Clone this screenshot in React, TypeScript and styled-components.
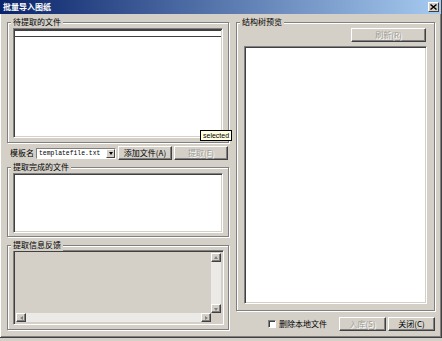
import styled, { createGlobalStyle } from "styled-components";

const GlobalStyle = createGlobalStyle`
  html, body {
    margin: 0;
    padding: 0;
    background: #d4d0c8;
  }
  body {
    font-family: "Noto Sans CJK SC", "Liberation Sans", sans-serif;
    font-size: 8px;
    color: #000;
  }
`;

const Window = styled.div`
  width: 442px;
  height: 338px;
  box-sizing: border-box;
  background: #d4d0c8;
  border-right: 1px solid #404040;
  border-bottom: 1px solid #404040;
  box-shadow: inset 1px 1px 0 #fff, inset -1px -1px 0 #808080;
  display: flex;
  flex-direction: column;
`;

const TitleBar = styled.div`
  height: 14px;
  flex: none;
  display: flex;
  align-items: center;
  justify-content: space-between;
  padding: 0 2px 0 3px;
  background: linear-gradient(to right, #0a246a, #a6caf0);
`;

const Title = styled.span`
  color: #fff;
  font-weight: bold;
  font-size: 8px;
  line-height: 10px;
`;

const CloseBox = styled.div`
  width: 11px;
  height: 10px;
  box-sizing: border-box;
  background: #d4d0c8;
  border-top: 1px solid #fff;
  border-left: 1px solid #fff;
  border-right: 1px solid #404040;
  border-bottom: 1px solid #404040;
  display: flex;
  align-items: center;
  justify-content: center;
`;

const Content = styled.div`
  flex: 1;
  display: flex;
  gap: 7px;
  padding-left: 7px;
`;

const LeftCol = styled.div`
  width: 222px;
  display: flex;
  flex-direction: column;
  padding-top: 8px;
`;

const RightCol = styled.div`
  width: 199px;
  display: flex;
  flex-direction: column;
  padding-top: 8px;
`;

const Group = styled.div<{ $h: number; $mt?: number; $pad: string }>`
  position: relative;
  height: ${(p) => p.$h}px;
  margin-top: ${(p) => p.$mt ?? 0}px;
  box-sizing: border-box;
  border: 1px solid #808080;
  box-shadow: inset 1px 1px 0 #fff, 1px 1px 0 #fff;
  padding: ${(p) => p.$pad};
  display: flex;
  flex-direction: column;
`;

const Legend = styled.span`
  position: absolute;
  top: -7px;
  left: 3px;
  padding: 0 2px;
  background: #d4d0c8;
  font-size: 8px;
  line-height: 12px;
  white-space: nowrap;
`;

const Sunken = styled.div<{ $bg?: string }>`
  flex: 1;
  box-sizing: border-box;
  background: ${(p) => p.$bg ?? "#fff"};
  border-top: 1px solid #808080;
  border-left: 1px solid #808080;
  border-right: 1px solid #fff;
  border-bottom: 1px solid #fff;
  box-shadow: inset 1px 1px 0 #404040, inset -1px -1px 0 #d4d0c8;
  display: flex;
  flex-direction: column;
  padding: 2px;
`;

const ListHeader = styled.div`
  height: 5px;
  background: #fff;
  border-top: 1px solid #404040;
  border-bottom: 1px solid #404040;
  margin: -1px -1px 0 -1px;
`;

const Tip = styled.div`
  position: absolute;
  left: 192px;
  top: 107px;
  height: 11px;
  padding: 0 2px;
  background: #ffffe1;
  border: 1px solid #000;
  font-family: "Liberation Sans", sans-serif;
  font-size: 7px;
  line-height: 9px;
  box-sizing: border-box;
`;

const Row = styled.div<{ $mt: number }>`
  display: flex;
  align-items: center;
  margin-top: ${(p) => p.$mt}px;
  height: 14px;
`;

const Label = styled.span`
  flex: none;
  white-space: nowrap;
  margin: 0 2px 0 3px;
  font-size: 8px;
  line-height: 10px;
`;

const Combo = styled.div`
  flex: none;
  width: 80px;
  height: 11px;
  box-sizing: border-box;
  background: #fff;
  border-top: 1px solid #808080;
  border-left: 1px solid #808080;
  border-right: 1px solid #fff;
  border-bottom: 1px solid #fff;
  display: flex;
  align-items: stretch;
  margin-right: 2px;
`;

const ComboText = styled.span`
  flex: 1;
  font-family: "Liberation Mono", monospace;
  font-size: 6.4px;
  line-height: 9px;
  padding-left: 2px;
  white-space: nowrap;
`;

const DropBtn = styled.div`
  width: 9px;
  box-sizing: border-box;
  background: #d4d0c8;
  border-top: 1px solid #fff;
  border-left: 1px solid #fff;
  border-right: 1px solid #404040;
  border-bottom: 1px solid #404040;
  display: flex;
  align-items: center;
  justify-content: center;
`;

const Arrow = styled.span<{ $dir: "down" | "up" | "left" | "right"; $c?: string }>`
  width: 0;
  height: 0;
  border: 2px solid transparent;
  ${(p) =>
    p.$dir === "down"
      ? `border-top: 3px solid ${p.$c ?? "#000"}; border-bottom: 0; margin-top: 1px;`
      : p.$dir === "up"
      ? `border-bottom: 3px solid ${p.$c ?? "#000"}; border-top: 0;`
      : p.$dir === "left"
      ? `border-right: 3px solid ${p.$c ?? "#000"}; border-left: 0;`
      : `border-left: 3px solid ${p.$c ?? "#000"}; border-right: 0;`}
`;

const Button = styled.div<{ $w: number; $disabled?: boolean }>`
  width: ${(p) => p.$w}px;
  height: 14px;
  box-sizing: border-box;
  background: #d4d0c8;
  border-top: 1px solid #fff;
  border-left: 1px solid #fff;
  border-right: 1px solid #404040;
  border-bottom: 1px solid #404040;
  box-shadow: inset -1px -1px 0 #808080;
  display: flex;
  align-items: center;
  justify-content: center;
  font-size: 8px;
  line-height: 10px;
  white-space: nowrap;
  color: ${(p) => (p.$disabled ? "#a09c94" : "#000")};
  text-shadow: ${(p) => (p.$disabled ? "1px 1px 0 #fff" : "none")};
  flex: none;
`;

const Gap = styled.div<{ $w: number }>`
  width: ${(p) => p.$w}px;
  flex: none;
`;

const ScrollArea = styled.div`
  flex: 1;
  display: grid;
  grid-template-columns: 1fr 10px;
  grid-template-rows: 1fr 9px;
`;

const VBar = styled.div`
  display: flex;
  flex-direction: column;
  background: #ebeae6;
`;

const HBar = styled.div`
  display: flex;
  background: #ebeae6;
`;

const Track = styled.div`
  flex: 1;
`;

const ScrollBtn = styled.div`
  width: 10px;
  height: 9px;
  box-sizing: border-box;
  background: #d4d0c8;
  border-top: 1px solid #fff;
  border-left: 1px solid #fff;
  border-right: 1px solid #404040;
  border-bottom: 1px solid #404040;
  box-shadow: inset -1px -1px 0 #808080;
  display: flex;
  align-items: center;
  justify-content: center;
`;

const Corner = styled.div`
  background: #d4d0c8;
`;

const RightTop = styled.div`
  display: flex;
  justify-content: flex-end;
  padding-right: 1px;
  margin-bottom: 4px;
`;

const BottomRow = styled.div`
  display: flex;
  align-items: center;
  margin-top: 6px;
  padding-left: 32px;
`;

const Check = styled.div`
  width: 8px;
  height: 8px;
  box-sizing: border-box;
  background: #fff;
  border-top: 1px solid #808080;
  border-left: 1px solid #808080;
  border-right: 1px solid #fff;
  border-bottom: 1px solid #fff;
  box-shadow: inset 1px 1px 0 #404040;
  margin-right: 3px;
`;

const CheckLabel = styled.span`
  font-size: 8px;
  line-height: 10px;
  margin-right: 12px;
  white-space: nowrap;
`;

export default function App() {
  return (
    <>
      <GlobalStyle />
      <Window>
        <TitleBar>
          <Title>批量导入图纸</Title>
          <CloseBox>
            <svg width="7" height="6" viewBox="0 0 7 6">
              <path d="M0.5 0.5 L6.5 5.5 M6.5 0.5 L0.5 5.5" stroke="#000" strokeWidth="1.4" />
            </svg>
          </CloseBox>
        </TitleBar>
        <Content>
          <LeftCol>
            <Group $h={121} $pad="5px 5px 4px 5px">
              <Legend>待提取的文件</Legend>
              <Sunken>
                <ListHeader />
              </Sunken>
              <Tip>selected</Tip>
            </Group>
            <Row $mt={3}>
              <Label>模板名</Label>
              <Combo>
                <ComboText>templatefile.txt</ComboText>
                <DropBtn>
                  <Arrow $dir="down" />
                </DropBtn>
              </Combo>
              <Button $w={54}>添加文件(A)</Button>
              <Gap $w={2} />
              <Button $w={54} $disabled>
                提取(E)
              </Button>
            </Row>
            <Group $h={70} $mt={7} $pad="5px 5px 3px 5px">
              <Legend>提取完成的文件</Legend>
              <Sunken />
            </Group>
            <Group $h={85} $mt={8} $pad="4px 4px 4px 5px">
              <Legend>提取信息反馈</Legend>
              <Sunken $bg="#d4d0c8">
                <ScrollArea>
                  <div />
                  <VBar>
                    <ScrollBtn>
                      <Arrow $dir="up" $c="#808080" />
                    </ScrollBtn>
                    <Track />
                    <ScrollBtn>
                      <Arrow $dir="down" $c="#808080" />
                    </ScrollBtn>
                  </VBar>
                  <HBar>
                    <ScrollBtn>
                      <Arrow $dir="left" $c="#808080" />
                    </ScrollBtn>
                    <Track />
                    <ScrollBtn>
                      <Arrow $dir="right" $c="#808080" />
                    </ScrollBtn>
                  </HBar>
                  <Corner />
                </ScrollArea>
              </Sunken>
            </Group>
          </LeftCol>
          <RightCol>
            <Group $h={289} $pad="5px 7px 6px 7px">
              <Legend>结构树预览</Legend>
              <RightTop>
                <Button $w={75} $disabled>
                  刷新(R)
                </Button>
              </RightTop>
              <Sunken />
            </Group>
            <BottomRow>
              <Check />
              <CheckLabel>删除本地文件</CheckLabel>
              <Button $w={47} $disabled>
                入库(S)
              </Button>
              <Gap $w={2} />
              <Button $w={47}>关闭(C)</Button>
            </BottomRow>
          </RightCol>
        </Content>
      </Window>
    </>
  );
}
